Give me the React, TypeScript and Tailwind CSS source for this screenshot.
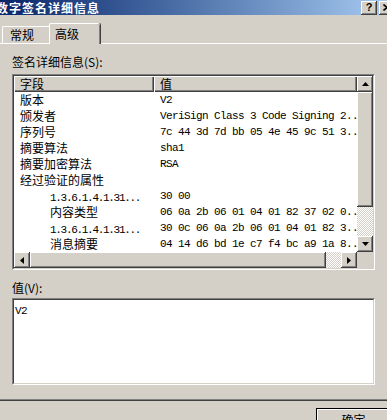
import React from "react";

// Win2k-style "数字签名详细信息" dialog, advanced tab

const CJK = "font-['Noto_Sans_CJK_SC',sans-serif]";
const MONO = "font-['Liberation_Mono','Noto_Sans_CJK_SC',monospace]";

const RAISED =
  "bg-[#d4d0c8] shadow-[inset_-1px_-1px_#404040,inset_1px_1px_#ffffff,inset_-2px_-2px_#808080,inset_2px_2px_#d4d0c8]";
const TRACK =
  "bg-[repeating-conic-gradient(#d4d0c8_0%_25%,#ffffff_0%_50%)] bg-[length:2px_2px]";

type Row = { field: string; value: string; sub?: boolean; ascii?: boolean };

const ROWS: Row[] = [
  { field: "版本", value: "V2" },
  { field: "颁发者", value: "VeriSign Class 3 Code Signing 2.." },
  { field: "序列号", value: "7c 44 3d 7d bb 05 4e 45 9c 51 3.." },
  { field: "摘要算法", value: "sha1" },
  { field: "摘要加密算法", value: "RSA" },
  { field: "经过验证的属性", value: "" },
  { field: "1.3.6.1.4.1.31...", value: "30 00", sub: true, ascii: true },
  { field: "内容类型", value: "06 0a 2b 06 01 04 01 82 37 02 0..", sub: true },
  { field: "1.3.6.1.4.1.31...", value: "30 0c 06 0a 2b 06 01 04 01 82 3..", sub: true, ascii: true },
  { field: "消息摘要", value: "04 14 d6 bd 1e c7 f4 bc a9 1a 8..", sub: true },
];

function Arrow({ dir }: { dir: "up" | "down" | "left" | "right" }) {
  const pts = {
    up: "3.5,0 7,4 0,4",
    down: "0,0 7,0 3.5,4",
    left: "4,0 4,7 0,3.5",
    right: "0,0 4,3.5 0,7",
  }[dir];
  const horiz = dir === "left" || dir === "right";
  return (
    <svg width={horiz ? 4 : 7} height={horiz ? 7 : 4} viewBox={horiz ? "0 0 4 7" : "0 0 7 4"}>
      <polygon points={pts} fill="#000" />
    </svg>
  );
}

function SmallButton({ dir, className = "" }: { dir: "up" | "down" | "left" | "right"; className?: string }) {
  return (
    <div className={`${RAISED} flex items-center justify-center shrink-0 ${className}`}>
      <Arrow dir={dir} />
    </div>
  );
}

export default function App() {
  return (
    <div className={`w-[387px] h-[420px] overflow-hidden bg-[#d4d0c8] flex flex-col ${CJK} text-[12px] text-black`}>
      {/* title bar */}
      <div className="h-[15px] shrink-0 flex items-center bg-gradient-to-r from-[#0a246a] to-[#a6caf0]">
        <span className="-ml-[4px] text-white font-bold text-[12px] tracking-[1px] leading-[15px] whitespace-nowrap">
          数字签名详细信息
        </span>
        <div className="ml-auto flex items-center gap-[2px] -mr-[8px]">
          <div className={`${RAISED} w-[16px] h-[14px] flex items-center justify-center font-['Liberation_Sans',sans-serif] font-bold text-[11px] leading-none`}>
            ?
          </div>
          <div className={`${RAISED} w-[16px] h-[14px] flex items-center justify-center`}>
            <svg width="8" height="7" viewBox="0 0 8 7">
              <path d="M0.5 0.5 L7.5 6.5 M7.5 0.5 L0.5 6.5" stroke="#000" strokeWidth="1.6" />
            </svg>
          </div>
        </div>
      </div>

      {/* tabs */}
      <div className="mt-[8px] h-[21px] shrink-0 flex items-end pl-[2px] -mb-[1px] relative z-10">
        <div className="w-[47px] h-[17px] mb-[1px] border-t border-l border-white rounded-tl-[2px] flex items-center pl-[7px] leading-[16px]">
          常规
        </div>
        <div className="w-[51px] h-[21px] bg-[#d4d0c8] border-t border-l border-white rounded-t-[2px] shadow-[inset_-1px_0_#808080,1px_0_#404040] pt-[2px] pl-[5px] leading-[16px]">
          高级
        </div>
      </div>

      {/* tab panel */}
      <div className="-ml-[4px] w-[400px] h-[358px] shrink-0 border-t border-white border-b border-b-[#404040] shadow-[inset_0_-1px_#808080] flex flex-col pl-[16px]">
        <div className="mt-[10px] h-[16px] leading-[16px]">签名详细信息(S):</div>

        {/* list view */}
        <div className="mt-[4px] w-[363px] h-[196px] border border-t-[#808080] border-l-[#808080] border-r-white border-b-white">
          <div className="h-full border border-t-[#404040] border-l-[#404040] border-r-[#d4d0c8] border-b-[#d4d0c8] flex flex-col">
            <div className="flex flex-1 min-h-0">
              <div className="flex-1 min-w-0 bg-white overflow-hidden flex flex-col">
                <div className="h-[16px] shrink-0 flex leading-[16px]">
                  <div className="w-[140px] shrink-0 shadow-[inset_1px_1px_#ffffff,inset_-1px_-1px_#404040,inset_-2px_-2px_#808080] bg-[#d4d0c8] pl-[6px]">
                    字段
                  </div>
                  <div className="flex-1 shadow-[inset_1px_1px_#ffffff,inset_-1px_-1px_#404040,inset_-2px_-2px_#808080] bg-[#d4d0c8] pl-[6px]">
                    值
                  </div>
                </div>
                {ROWS.map((r, i) => (
                  <div key={i} className="h-[16px] shrink-0 flex leading-[16px] whitespace-nowrap">
                    <div className={`w-[140px] shrink-0 overflow-hidden ${r.sub ? "pl-[36px]" : "pl-[6px]"}`}>
                      {r.ascii ? (
                        <span className={`${MONO} text-[11px] tracking-[-1.3px]`}>{r.field}</span>
                      ) : (
                        r.field
                      )}
                    </div>
                    <div className={`pl-[6px] ${MONO} text-[11px] tracking-[-0.6px]`}>{r.value}</div>
                  </div>
                ))}
              </div>

              {/* vertical scrollbar */}
              <div className="w-[16px] shrink-0 flex flex-col">
                <SmallButton dir="up" className="h-[16px]" />
                <div className={`${RAISED} h-[115px] shrink-0`} />
                <div className={`flex-1 ${TRACK}`} />
                <SmallButton dir="down" className="h-[16px]" />
              </div>
            </div>

            {/* horizontal scrollbar */}
            <div className="h-[16px] shrink-0 flex">
              <SmallButton dir="left" className="w-[16px]" />
              <div className={`${RAISED} w-[296px] shrink-0`} />
              <div className={`flex-1 ${TRACK}`} />
              <SmallButton dir="right" className="w-[16px]" />
              <div className="w-[16px] shrink-0 bg-[#d4d0c8]" />
            </div>
          </div>
        </div>

        <div className="mt-[10px] h-[16px] leading-[16px]">值(V):</div>

        {/* value box */}
        <div className="mt-[2px] w-[363px] h-[87px] border border-t-[#808080] border-l-[#808080] border-r-white border-b-white">
          <div className="h-full bg-white border border-t-[#404040] border-l-[#404040] border-r-[#d4d0c8] border-b-[#d4d0c8] pl-[1px]">
            <span className={`${MONO} text-[11px] tracking-[-0.6px] leading-[14px]`}>V2</span>
          </div>
        </div>
      </div>

      {/* footer */}
      <div className="mt-[7px] pl-[316px]">
        <div className="w-[75px] h-[23px] border border-black">
          <div className={`${RAISED} h-full flex items-center justify-center leading-[16px]`}>确定</div>
        </div>
      </div>
    </div>
  );
}
